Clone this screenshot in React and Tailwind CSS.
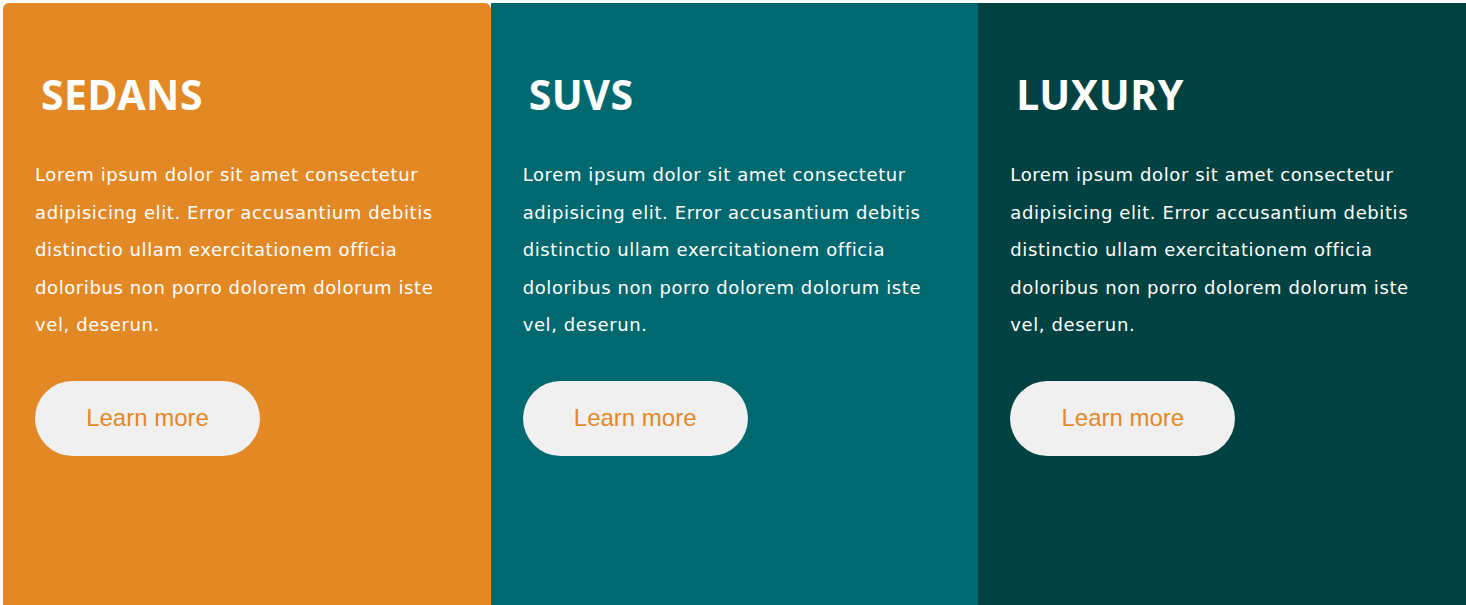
const cards = [
  { title: "SEDANS", bg: "bg-[#e28926]", rounded: "rounded-[6px]" },
  { title: "SUVS", bg: "bg-[#006970]", rounded: "" },
  { title: "LUXURY", bg: "bg-[#004241]", rounded: "" },
];

const text =
  "Lorem ipsum dolor sit amet consectetur adipisicing elit. Error accusantium debitis distinctio ullam exercitationem officia doloribus non porro dolorem dolorum iste vel, deserun.";

export default function App() {
  return (
    <div className="min-h-screen bg-white pt-[3px] pl-[3px]">
      <div className="flex h-[640px] w-[1463px]">
        {cards.map((c) => (
          <div
            key={c.title}
            className={`${c.bg} ${c.rounded} flex-1 pl-[32px] pr-[36px] pt-[65px] text-white`}
          >
            <h2 className="pl-[6px] font-['Noto_Sans',sans-serif] text-[41px] font-bold leading-[52px] tracking-[0.5px]">
              {c.title}
            </h2>
            <p className="mt-[36px] font-['DejaVu_Sans',sans-serif] text-[18px] leading-[37.5px] tracking-[0.6px]">
              {text}
            </p>
            <button className="mt-[37px] flex h-[75px] w-[225px] items-center justify-center rounded-full bg-[#f0f0f0] font-['Liberation_Sans',Arial,sans-serif] text-[24px] text-[#e28926]">
              Learn more
            </button>
          </div>
        ))}
      </div>
    </div>
  );
}
